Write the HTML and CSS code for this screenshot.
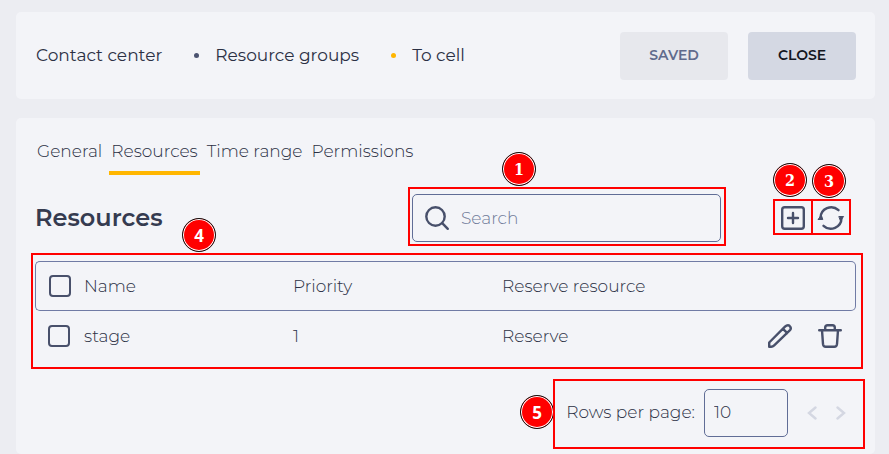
FILE: index.html
```html
<!DOCTYPE html>
<html lang="en">
<head>
<meta charset="utf-8">
<meta name="viewport" content="width=device-width, initial-scale=1">
<title>Resource groups</title>
<link rel="stylesheet" href="styles.css">
</head>
<body>
<header class="card topbar">
  <nav class="crumbs" aria-label="Breadcrumb">
    <a href="#">Contact center</a>
    <a href="#">Resource groups</a>
    <a href="#" class="current">To cell</a>
  </nav>
  <div class="buttons">
    <button type="button" class="btn btn-saved">SAVED</button>
    <button type="button" class="btn btn-close">CLOSE</button>
  </div>
</header>

<main class="card panel">
  <nav class="tabs">
    <a href="#">General</a>
    <a href="#" class="active">Resources</a>
    <a href="#">Time range</a>
    <a href="#">Permissions</a>
  </nav>

  <section class="toolbar">
    <h1>Resources</h1>
    <div class="search mark mark-search">
      <svg class="icon" viewBox="0 0 24 24" aria-hidden="true"><circle cx="10.500" cy="10.500" r="9.200"/><path d="M17.200 17.200l5.600 5.600"/></svg>
      <input type="search" placeholder="Search" aria-label="Search">
      <span class="badge badge-serif">1</span>
    </div>
    <div class="tools">
      <button type="button" class="tool mark mark-tool" aria-label="Add">
        <svg class="icon" viewBox="0 0 24 24" aria-hidden="true"><rect x="1.200" y="1.200" width="21.600" height="21.600" rx="2.500"/><path d="M12 7v10M7 12h10"/></svg>
        <span class="badge badge-serif">2</span>
      </button>
      <button type="button" class="tool mark mark-tool mark-refresh" aria-label="Refresh">
        <svg class="icon icon-wide" viewBox="0 0 26 24" aria-hidden="true"><path d="M2.500 12A10.700 10.700 0 0 1 20.500 4.200M23.500 12A10.700 10.700 0 0 1 5.500 19.800"/><path class="solid" d="M.4 13.500h4.400l-1.400-4zM21.200 10.500h4.400l-3 4z" transform="translate(0 0)"/></svg>
        <span class="badge badge-serif">3</span>
      </button>
    </div>
  </section>

  <section class="mark mark-table">
    <table>
      <colgroup><col class="col-check"><col class="col-name"><col class="col-priority"><col><col class="col-actions"></colgroup>
      <thead>
        <tr>
          <th><input type="checkbox" aria-label="Select all"></th>
          <th>Name</th>
          <th>Priority</th>
          <th>Reserve resource</th>
          <th></th>
        </tr>
      </thead>
      <tbody>
        <tr>
          <td><input type="checkbox" aria-label="Select stage"></td>
          <td>stage</td>
          <td>1</td>
          <td>Reserve</td>
          <td>
            <div class="actions">
              <button type="button" class="tool" aria-label="Edit">
                <svg class="icon" viewBox="0 0 24 24" aria-hidden="true"><path d="M1.200 22.800v-4.300L17 2.700q1.500-1.500 3-1.500t2.200 1.500q1.300 1.800-.2 3.400L6.200 21.400q-1.400 1.400-3 1.400zM15 4.800l4.300 4.300"/></svg>
              </button>
              <button type="button" class="tool" aria-label="Delete">
                <svg class="icon" viewBox="0 0 24 24" aria-hidden="true"><path d="M1.200 6.200h21.600M4 6.200l1 14q.3 2.600 2.700 2.600h8.600q2.400 0 2.700-2.600l1-14M7.200 6V3.500q0-2.300 2.300-2.300h5q2.300 0 2.300 2.300V6"/></svg>
              </button>
            </div>
          </td>
        </tr>
      </tbody>
    </table>
    <span class="badge">4</span>
  </section>

  <footer class="pager mark mark-pager">
    <label for="rows">Rows per page:</label>
    <input id="rows" type="text" inputmode="numeric" value="10">
    <button type="button" class="tool page" aria-label="Previous page"><svg viewBox="0 0 10 14" aria-hidden="true"><path d="M8.500 1.500L2 7l6.500 5.500"/></svg></button>
    <button type="button" class="tool page" aria-label="Next page"><svg viewBox="0 0 10 14" aria-hidden="true"><path d="M1.500 1.500L8 7l-6.500 5.500"/></svg></button>
    <span class="badge">5</span>
  </footer>
</main>
</body>
</html>
```
FILE: styles.css
```css
* {
  box-sizing: border-box;
}

html {
  background: #ecedf2;
}

body {
  margin: 0;
  padding: 12px 14px 0 16px;
  min-height: 100vh;
  display: flex;
  flex-direction: column;
  gap: 19px;
  color: #2b3044;
  font: 300 17px/24px Montserrat, Inter, "Liberation Sans", sans-serif;
}

button,
input {
  font: inherit;
  color: inherit;
}

a {
  color: inherit;
  text-decoration: none;
}

.card {
  background: #f3f4f8;
  border-radius: 5px;
}

.topbar {
  display: flex;
  align-items: center;
  justify-content: space-between;
  padding: 20px 19px 19px 20px;
}

.crumbs {
  display: flex;
  padding-bottom: 2px;
  font-weight: 400;
}

.crumbs a + a {
  display: flex;
  align-items: center;
  margin-left: 32px;
}

.crumbs a + a::before {
  content: "";
  width: 5px;
  height: 5px;
  margin-right: 16px;
  border-radius: 50%;
  background: #4b5370;
}

.crumbs a.current::before {
  background: #ffb600;
}

.buttons {
  display: flex;
  gap: 20px;
}

.btn {
  width: 108px;
  height: 48px;
  padding: 0 0 2px;
  border: 0;
  border-radius: 4px;
  font-size: 14px;
  font-weight: 600;
}

.btn-saved {
  background: #e7e8ed;
  color: #606b8c;
}

.btn-close {
  background: #d4d8e3;
  color: #14161f;
}

.panel {
  flex: 1;
  padding: 20px 19px 0;
}

.tabs {
  display: flex;
  gap: 5px;
}

.tabs a {
  padding: 1px 2px 8px;
  border-bottom: 4px solid transparent;
}

.tabs a.active {
  border-color: #ffb600;
}

.toolbar {
  display: flex;
  align-items: center;
  margin-top: 19px;
}

h1 {
  flex: 1;
  margin: 0;
  color: #353b50;
  font-size: 24px;
  font-weight: 600;
}

.mark {
  position: relative;
}

.mark::after {
  content: "";
  position: absolute;
  border: 2px solid #f00;
  pointer-events: none;
}

.badge {
  position: absolute;
  width: 34px;
  height: 34px;
  border: 1px solid #111;
  border-radius: 50%;
  background: #f00;
  box-shadow: inset 0 0 0 1px #fff;
  color: #fff;
  font: bold 17px/34px "Open Sans", sans-serif;
  text-align: center;
}

.badge-serif {
  font-family: "DejaVu Serif Condensed", "DejaVu Serif", serif;
  font-size: 16px;
}

.icon {
  display: block;
  width: 24px;
  height: 24px;
  overflow: visible;
  fill: none;
  stroke: #48506b;
  stroke-width: 2.4;
  stroke-linecap: round;
  stroke-linejoin: round;
}

.icon-wide {
  width: 26px;
}

.icon .solid {
  fill: #48506b;
  stroke-width: 1;
}

.search {
  flex: 0 1 309px;
  display: flex;
  align-items: center;
  gap: 12px;
  height: 48px;
  padding: 0 12px;
  border: 1px solid #606d96;
  border-radius: 5px;
}

.search input {
  flex: 1;
  min-width: 0;
  padding: 0;
  border: 0;
  outline: 0;
  background: none;
}

.search input::placeholder {
  color: #6f7a99;
  opacity: 1;
}

.mark-search::after {
  inset: -8px -6px -5px -5px;
}

.mark-search .badge {
  left: 89px;
  top: -43px;
}

.tools {
  display: flex;
  gap: 13px;
  margin: 0 12px 0 60px;
}

.tool {
  padding: 0;
  border: 0;
  background: none;
}

.mark-tool::after {
  inset: -7px -8px -5px -8px;
}

.mark-refresh::after {
  inset: -7px -7px -5px;
}

.mark-tool .badge {
  left: -8px;
  top: -43px;
}

.mark-refresh .badge {
  left: -6px;
  top: -42px;
}

.mark-table {
  margin-top: 19px;
}

.mark-table::after {
  inset: -8px -7px -9px -4px;
}

.mark-table .badge {
  left: 147px;
  top: -43px;
}

table {
  width: 100%;
  table-layout: fixed;
  border-collapse: separate;
  border-spacing: 0;
}

.col-check {
  width: 49px;
}

.col-name {
  width: 209px;
}

.col-priority {
  width: 209px;
}

.col-actions {
  width: 102px;
}

th,
td {
  height: 50px;
  padding: 0;
  font-weight: 300;
  text-align: left;
  vertical-align: middle;
}

td {
  height: 49px;
}

th {
  border: solid #707ba5;
  border-width: 1px 0;
}

th:first-child {
  border-left-width: 1px;
  border-radius: 5px 0 0 5px;
}

th:last-child {
  border-right-width: 1px;
  border-radius: 0 5px 5px 0;
}

th:first-child,
td:first-child {
  padding-left: 13px;
}

input[type="checkbox"] {
  appearance: none;
  display: block;
  width: 22px;
  height: 22px;
  margin: 0;
  border: 2px solid #48506b;
  border-radius: 4px;
}

.actions {
  display: flex;
  justify-content: flex-end;
  gap: 26px;
  padding-right: 14px;
}

.pager {
  display: flex;
  align-items: center;
  width: fit-content;
  margin: 29px 10px 0 auto;
}

.pager label {
  padding-bottom: 2px;
}

.pager input {
  width: 84px;
  height: 48px;
  margin: 0 19px 0 9px;
  padding: 0 9px 2px;
  border: 1px solid #606d96;
  border-radius: 5px;
  background: none;
}

.page svg {
  display: block;
  width: 10px;
  height: 14px;
  fill: none;
  stroke: #d4d7e2;
  stroke-width: 2.4;
  stroke-linecap: round;
}

.page + .page {
  margin-left: 19px;
}

.mark-pager::after {
  inset: -10px -19px -12px -13px;
}

.mark-pager .badge {
  left: -46px;
  top: 6px;
}
```
